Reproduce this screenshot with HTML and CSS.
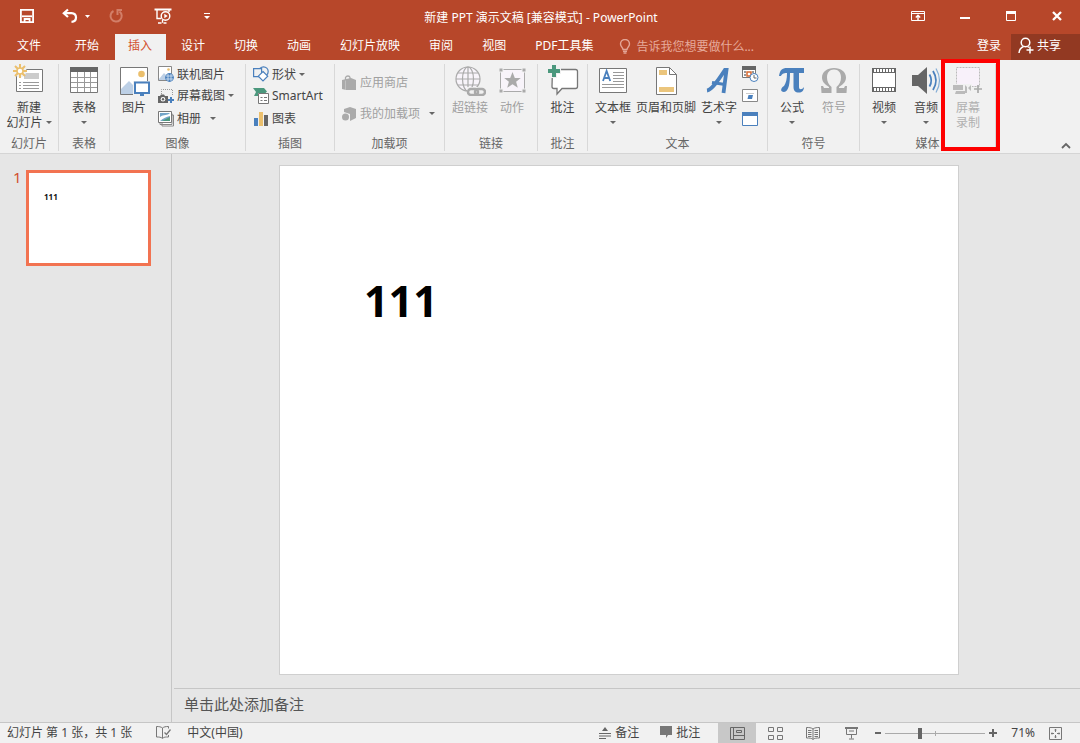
FILE: index.html
```html
<!DOCTYPE html>
<html lang="zh-CN">
<head>
<meta charset="utf-8">
<title>新建 PPT 演示文稿 [兼容模式] - PowerPoint</title>
<link rel="stylesheet" href="styles.css">
</head>
<body>
<div class="app">
  <header class="header">
    <div class="titlebar">
      <div class="quick">
        <button class="icon-btn save" aria-label="保存"><svg width="16" height="16" viewBox="0 0 16 16" fill="none" stroke="#fff" stroke-width="1.8"><path d="M1.9 1.9h12.2v12.2H1.9z"/><path d="M3 8.3h10"/><path d="M5.6 14v-3h5v3"/></svg></button>
        <button class="icon-btn undo" aria-label="撤消"><svg width="18" height="16" viewBox="0 0 18 16" fill="none" stroke="#fff" stroke-width="2.2"><path d="M7 1.5 2.8 5.2 7 9"/><path d="M3 5.2h7.5c6 .3 6 8.3 0 8.6"/></svg><svg width="5" height="3" viewBox="0 0 5 3"><path d="M0 0h5L2.5 3z" fill="#fff"/></svg></button>
        <button class="icon-btn redo" aria-label="重复"><svg width="16" height="16" viewBox="0 0 16 16" fill="none" stroke="#d27e68" stroke-width="2"><path d="M5.500 3A5.600 5.600 0 1 0 11.500 3.500"/><path d="M9.500 7V2h4.500"/></svg></button>
        <button class="icon-btn show" aria-label="从头开始放映"><svg width="18" height="16" viewBox="0 0 18 16" fill="none" stroke="#fff"><path d="M.5 1.5h17" stroke-width="2"/><path d="M3 2v8.500h4M15 2v2" stroke-width="1.400"/><circle cx="11.500" cy="8" r="4.300" stroke-width="1.400"/><path d="m10.300 5.800 3.400 2.200-3.400 2.200z" fill="#fff" stroke="none"/><path d="M8.500 12v2.700M4 15h3.500M9.500 15h3" stroke-width="1.300"/></svg></button>
        <button class="icon-btn" aria-label="自定义快速访问工具栏"><svg width="7" height="7" viewBox="0 0 7 7"><path d="M0 0h6v1H0zM0 3h6L3 6z" fill="#fff"/></svg></button>
      </div>
      <div class="title">新建 PPT 演示文稿 [兼容模式] - PowerPoint</div>
      <div class="window">
        <button class="icon-btn" aria-label="功能区显示选项"><svg width="14" height="12" viewBox="0 0 14 12" fill="none" stroke="#fff"><path d="M.5 1.500h13v9H.5zM.5 3.500h13"/><path d="M7 10V6M4.800 7.500 7 5.300l2.200 2.200" stroke-width="1.400"/></svg></button>
        <button class="icon-btn" aria-label="最小化"><svg width="12" height="12" viewBox="0 0 12 12"><path d="M1 7h10v2H1z" fill="#fff"/></svg></button>
        <button class="icon-btn" aria-label="最大化"><svg width="12" height="12" viewBox="0 0 12 12"><path d="M1.500 2h9v8.500h-9z" fill="none" stroke="#fff"/><path d="M1 1h10v3H1z" fill="#fff"/></svg></button>
        <button class="icon-btn" aria-label="关闭"><svg width="12" height="12" viewBox="0 0 12 12"><path d="m2 2 8 8M10 2l-8 8" stroke="#fff" stroke-width="2.300"/></svg></button>
      </div>
    </div>
    <nav class="tabs">
      <button class="tab file">文件</button>
      <button class="tab">开始</button>
      <button class="tab active">插入</button>
      <button class="tab">设计</button>
      <button class="tab">切换</button>
      <button class="tab">动画</button>
      <button class="tab">幻灯片放映</button>
      <button class="tab">审阅</button>
      <button class="tab">视图</button>
      <button class="tab">PDF工具集</button>
      <label class="tell"><svg width="12" height="15" viewBox="0 0 12 15" fill="none" stroke="#e3a596" stroke-width="1.400"><path d="M4 10.500C4 8.500 1.500 7.500 1.500 5a4.500 4.500 0 0 1 9 0c0 2.500-2.500 3.500-2.500 5.500z"/><path d="M4 12.200h4M4.500 14h3"/></svg><input type="text" placeholder="告诉我您想要做什么..." aria-label="告诉我您想要做什么"></label>
      <button class="login">登录</button>
      <button class="share"><svg width="16" height="17" viewBox="0 0 16 17" fill="none" stroke="#fff" stroke-width="1.500"><circle cx="7.500" cy="5.500" r="4.300"/><path d="M1 16c.3-4 2-5.500 4.500-6.500M9.500 9.500l1.500 1M8.500 13h7M12 9.500v7"/></svg>共享</button>
    </nav>
  </header>

  <section class="ribbon" aria-label="插入">
    <div class="group g-slides">
      <div class="tools center">
        <button class="big"><svg width="32" height="32" viewBox="0 0 32 32"><path d="M3.500 5.500h26v22h-26z" fill="#fff" stroke="#777"/><path d="M11 9h15v6H11z" fill="#ccc"/><path d="M6 18.500h2M10 18.500h16M6 21.500h2M10 21.500h16M6 24.500h2M10 24.500h16" stroke="#999"/><circle cx="7" cy="7" r="6.500" fill="#f1f1f1"/><path d="M7 0v14M0 7h14M2 2l10 10M12 2 2 12" stroke="#ebbf6c" stroke-width="2"/><circle cx="7" cy="7" r="3" fill="#fff" stroke="#ebbf6c" stroke-width="1.500"/></svg><span>新建</span><span class="line2">幻灯片<i class="caret"></i></span></button>
      </div>
      <div class="name">幻灯片</div>
    </div>
    <div class="group g-table">
      <div class="tools center">
        <button class="big"><svg width="32" height="32" viewBox="0 0 32 32"><path d="M2.500 3.500h27v25h-27z" fill="#fff" stroke="#777"/><path d="M2 3h28v5H2z" fill="#666"/><path d="M3 13.500h26M3 18.500h26M3 23.500h26M9.500 8v20M16.500 8v20M22.500 8v20" stroke="#999"/></svg><span>表格</span><span class="line2"><i class="caret"></i></span></button>
      </div>
      <div class="name">表格</div>
    </div>
    <div class="group g-images">
      <div class="tools">
        <button class="big"><svg width="32" height="32" viewBox="0 0 32 32"><path d="M2.500 3.500h27v27h-27z" fill="#fff" stroke="#777"/><circle cx="23.500" cy="10" r="3.300" fill="#ebbf6c"/><path d="M3 30V25l8-8 6 6v7z" fill="#bdd0e6"/><path d="M15 17h17v15H15z" fill="#f1f1f1"/><path d="M17 18.500h14v10.500H17z" fill="#fff" stroke="#4a80bd" stroke-width="2"/><path d="M22 30h4v2h-4z" fill="#4a80bd"/></svg><span>图片</span></button>
        <div class="stack">
          <button class="small"><svg width="16" height="16" viewBox="0 0 16 16"><path d="M.5.500h13v14H.5z" fill="#fff" stroke="#888"/><circle cx="10.500" cy="3.500" r="1.300" fill="#ebbf6c"/><path d="m1 13 5-6 3 3v4H1z" fill="#bdd0e6"/><circle cx="11.500" cy="11.500" r="4.400" fill="#4a80bd"/><path d="M8 10h7M8 13h7M10 8v7M13 8v7" stroke="#dce8f5" stroke-width=".8"/></svg>联机图片</button>
          <button class="small"><svg width="16" height="16" viewBox="0 0 16 16"><path d="M3.500 6V1.500h11V8" fill="none" stroke="#999" stroke-dasharray="1 1"/><path d="M0 8h2l1-1.500h3L7 8h3v7H0z" fill="#666"/><circle cx="5" cy="11.300" r="2.300" fill="#fff"/><circle cx="5" cy="11.300" r="1.200" fill="#666"/><path d="M13 9v6M10 12h6" stroke="#4a80bd" stroke-width="2"/></svg>屏幕截图<i class="caret"></i></button>
          <button class="small album"><svg width="16" height="16" viewBox="0 0 16 16"><path d="M4 4h11.500v11H4zM2 2.500h12v11H2z" fill="#fff" stroke="#888"/><path d="M.5.500h13v11H.5z" fill="#fff" stroke="#777"/><path d="M2 2h10v8H2z" fill="#73a5c9"/><path d="M2 6c4-3 7-1 10-4v3C8 6 6 7 2 10z" fill="#fff"/><path d="m4 10 8-4v4z" fill="#4b987d"/></svg>相册<i class="caret"></i></button>
        </div>
      </div>
      <div class="name">图像</div>
    </div>
    <div class="group g-illus">
      <div class="tools">
        <div class="stack">
          <button class="small"><svg width="16" height="16" viewBox="0 0 16 16" fill="#f1f1f1" stroke="#4a80bd" stroke-width="1.200"><circle cx="10.500" cy="5.500" r="4.700"/><path d="M.6 2.600h8v8h-8z"/><path d="m10 5.500 4.700 4.700-4.700 4.700-4.700-4.700z" fill="#fff"/></svg>形状<i class="caret"></i></button>
          <button class="small"><svg width="16" height="16" viewBox="0 0 16 16"><path d="M0 0h11l3 3.500-1.500 1.500H5v3H1l2-4z" fill="#4b987d"/><path d="M5.500 5.500h10v10h-10z" fill="#fff" stroke="#777"/><path d="M7.500 9.500h2M11 9.500h3M7.500 12.500h2M11 12.500h3" stroke="#777"/></svg>SmartArt</button>
          <button class="small"><svg width="16" height="16" viewBox="0 0 16 16"><path d="M1 7h4v8H1z" fill="#4a80bd"/><path d="M6 1h4v14H6z" fill="#ebbf6c"/><path d="M11 4h4v11h-4z" fill="#666"/></svg>图表</button>
        </div>
      </div>
      <div class="name">插图</div>
    </div>
    <div class="group g-addins">
      <div class="tools">
        <div class="stack wide">
          <button class="small" disabled><svg width="15" height="16" viewBox="0 0 15 16"><path d="m0 5 9-2 5 2v10H4l-4-1z" fill="#aaa"/><path d="M3.500 5V2.500c1-2 4-2 4.500 0V5" fill="none" stroke="#aaa" stroke-width="1.300"/><path d="M3.500 5.500V15" stroke="#ccc" stroke-width=".7"/></svg>应用商店</button>
          <button class="small mine" disabled><svg width="15" height="16" viewBox="0 0 15 16"><path d="m2 3 6-2 6 2v9l-6 3V8L2 6z" fill="#aaa"/><circle cx="3.500" cy="11" r="3.500" fill="#aaa"/></svg>我的加载项<i class="caret"></i></button>
        </div>
      </div>
      <div class="name">加载项</div>
    </div>
    <div class="group g-links">
      <div class="tools">
        <button class="big" disabled><svg width="32" height="32" viewBox="0 0 32 32" fill="none" stroke="#aaa"><g stroke-width="1.200"><circle cx="14" cy="15" r="12" fill="#f8f4fa"/><ellipse cx="14" cy="15" rx="5.500" ry="12"/><path d="M2 15h24M4 9h20M4 21h20M14 3v24"/></g><path d="M13 23h19v9H13z" fill="#f1f1f1" stroke="none"/><rect x="14" y="25" width="10" height="6" rx="3" stroke-width="2.500"/><rect x="21" y="25" width="10" height="6" rx="3" stroke-width="2.500"/></svg><span>超链接</span></button>
        <button class="big" disabled><svg width="32" height="32" viewBox="0 0 32 32"><path d="M4.500 5.500h24v22h-24z" fill="#f8f4fa" stroke="#aaa"/><path d="M3 4h4v4H3zM26 4h4v4h-4zM3 25h4v4H3zM26 25h4v4h-4z" fill="#aaa" stroke="#f1f1f1"/><path d="m16.500 8 2.300 6h6l-4.700 3.800 1.700 6-5.300-3.500-5.300 3.500 1.700-6L8.200 14h6z" fill="#aaa"/></svg><span>动作</span></button>
      </div>
      <div class="name">链接</div>
    </div>
    <div class="group g-comment">
      <div class="tools center">
        <button class="big"><svg width="32" height="32" viewBox="0 0 32 32"><path d="M5.500 5.500h23q2 0 2 2v15q0 2-2 2H15l-5 5.500v-5.500H7q-2 0-2-2z" fill="#fff" stroke="#777" stroke-width="1.300"/><path d="M3.500 0h6.500v3.500H14v6.500h-4V14H3.500v-4H0V3.500h3.500z" fill="#f1f1f1"/><path d="M5 1h4v4h4v4H9v4H5V9H1V5h4z" fill="#4b987d"/></svg><span>批注</span></button>
      </div>
      <div class="name">批注</div>
    </div>
    <div class="group g-text">
      <div class="tools">
        <button class="big"><svg width="32" height="32" viewBox="0 0 32 32"><path d="M2.500 4.500h27v24h-27z" fill="#fff" stroke="#777"/><path d="m6 17 3.600-10L13.200 17M7.200 14H12" fill="none" stroke="#4a80bd" stroke-width="1.800"/><path d="M16 8.500h11M16 11.500h11M16 14.500h11M16 17.500h11M5 20.500h22M5 23.500h22" stroke="#999"/></svg><span>文本框</span><span class="line2"><i class="caret"></i></span></button>
        <button class="big"><svg width="32" height="32" viewBox="0 0 32 32"><path d="M6.500 3.500h13l7 7v20h-20z" fill="#fff" stroke="#777"/><path d="M19.500 3.500v7h7" fill="none" stroke="#777"/><path d="M9 6h8v5H9zM9 23h15v5H9z" fill="#ebc57c"/></svg><span>页眉和页脚</span></button>
        <button class="big"><svg width="32" height="32" viewBox="0 0 32 32"><path d="M4 26.500C9 26 16 15 22 5.800h1.500L20.500 29" fill="none" stroke="#4a80bd" stroke-width="3.800"/><path d="m9 18.500 13 2" stroke="#4a80bd" stroke-width="3"/></svg><span>艺术字</span><span class="line2"><i class="caret"></i></span></button>
        <div class="stack">
          <button class="small" aria-label="日期和时间"><svg width="17" height="16" viewBox="0 0 17 16"><path d="M.5 1.500h13v10H.5z" fill="#fff" stroke="#777"/><path d="M0 0h14v4H0z" fill="#666"/><path d="M2 6h2M2 9h2M10 6h2" stroke="#777" stroke-width="1.500"/><path d="M5 6h4v4H5z" fill="none" stroke="#d86b32" stroke-width="1.500"/><circle cx="12" cy="11.500" r="4" fill="#fff" stroke="#4a80bd"/><path d="M12 9v3h2.500" fill="none" stroke="#666"/></svg></button>
          <button class="small" aria-label="幻灯片编号"><svg width="17" height="16" viewBox="0 0 17 16"><path d="M.5 1.500h15v12H.5z" fill="#fff" stroke="#888"/><path d="M4 5.500h8" stroke="#ccc"/><path d="M6.500 7H11l-1 4H5.500z" fill="#4a80bd"/></svg></button>
          <button class="small" aria-label="对象"><svg width="17" height="16" viewBox="0 0 17 16"><path d="M.5 1.500h15v13H.5z" fill="#fff" stroke="#4a80bd"/><path d="M0 1h16v4H0z" fill="#4a80bd"/></svg></button>
        </div>
      </div>
      <div class="name">文本</div>
    </div>
    <div class="group g-symbols">
      <div class="tools">
        <button class="big"><svg width="32" height="32" viewBox="0 0 32 32"><path d="M3 12C4 6 6 4 11 4h17v5h-5v14c0 3 3 3 5 0-.3 4-2 5.500-5 5.500-4 0-5.500-2-5.500-5.500V9h-3.500c0 9-1 19-6 19-4 0-3.500-4 0-6 2-3 3-7 3-13-4 0-5 1-6 3z" fill="#4a80bd"/></svg><span>公式</span><span class="line2"><i class="caret"></i></span></button>
        <button class="big" disabled><svg width="32" height="32" viewBox="0 0 32 32"><path d="M3 22h2l1 2h5v-1C6 20 4 17 4 13.500 4 8 9 4 16 4s12 4 12 9.500c0 3.500-2 6.500-7 9.500v1h5l1-2h2l-.5 7H18.500v-6c3-2.500 4.500-5.500 4.500-9.500 0-5-2.500-8-7-8s-7 3-7 8c0 4 1.500 7 4.500 9.500v6H3.500z" fill="#aaa"/></svg><span>符号</span></button>
      </div>
      <div class="name">符号</div>
    </div>
    <div class="group g-media">
      <div class="tools">
        <button class="big"><svg width="32" height="32" viewBox="0 0 32 32"><path d="M4 4h24v24H4z" fill="#666"/><path d="M5 9h22v14H5z" fill="#fff"/><path d="M6 6.500h21M6 25.500h21" stroke="#fff" stroke-width="3" stroke-dasharray="2 1"/></svg><span>视频</span><span class="line2"><i class="caret"></i></span></button>
        <button class="big"><svg width="32" height="32" viewBox="0 0 32 32"><path d="M2 11h6l9-8v27l-9-8H2z" fill="#666"/><path d="M19.500 10.500q3.500 6 0 12M23 7q6 9.500 0 19" fill="none" stroke="#4a80bd" stroke-width="1.800"/><path d="M26 4.500q7 12 0 24" fill="none" stroke="#85aed6" stroke-width="1.200"/></svg><span>音频</span><span class="line2"><i class="caret"></i></span></button>
        <button class="big faded" disabled><svg width="32" height="32" viewBox="0 0 32 32"><path d="M4.500 3.500h23v19h-23z" fill="#f8f1fa" stroke="#bbb" stroke-dasharray="2 1"/><path d="M0 20h20v11H0z" fill="#f1f1f1"/><path d="M1 21h10v5H1zM4 27h9v3H3zM13 21l2 2v6h-2zM16 24l3-3v6z" fill="#bbb"/><path d="M26 21v8M22 25h8" stroke="#aaa" stroke-width="1.700"/></svg><span>屏幕</span><span>录制</span></button>
      </div>
      <div class="name">媒体</div>
      <div class="marker"></div>
    </div>
    <button class="collapse" aria-label="折叠功能区"><svg width="10" height="7" viewBox="0 0 10 7"><path d="m1 6 4-4 4 4" fill="none" stroke="#666" stroke-width="1.800"/></svg></button>
  </section>

  <main class="work">
    <aside class="slides">
      <span class="num">1</span>
      <button class="thumb" aria-label="幻灯片 1"><span>111</span></button>
    </aside>
    <div class="editor">
      <div class="stage"><article class="slide"><h1>111</h1></article></div>
      <textarea class="notes" rows="1" placeholder="单击此处添加备注" aria-label="备注"></textarea>
    </div>
  </main>

  <footer class="status">
    <span class="count">幻灯片 第 1 张，共 1 张</span>
    <button class="icon-btn proof" aria-label="拼写检查"><svg width="15" height="13" viewBox="0 0 15 13" fill="none" stroke="#777"><path d="M6.500 12V2C5 .8 3 .5.500.500v10.500c2.500 0 4.500 0 6 1.500 1-1 2-1.500 4-1.500h2V9M6.500 2C8 .8 9.500.500 12.500.500v2"/><path d="m8.500 6.500 2 2 4-5" stroke-width="1.300"/></svg></button>
    <button class="lang">中文(中国)</button>
    <div class="views">
      <button class="note-btn"><svg width="12" height="13" viewBox="0 0 12 13"><path d="M3 5h6L6 1zM0 7h12v1H0zM0 9.500h12v1H0zM0 12h7v1H0z" fill="#666"/></svg>备注</button>
      <button class="note-btn comments"><svg width="12" height="12" viewBox="0 0 12 12"><path d="M0 0h12v9H8l-2 3V9H0z" fill="#777"/></svg>批注</button>
      <button class="view on" aria-label="普通视图"><svg width="15" height="13" viewBox="0 0 15 13" fill="none" stroke="#666"><path d="M.5.500h14v12H.5zM3.500.500v12M3.500 8.500h11M6.500 3.500h5v2h-5z"/></svg></button>
      <button class="view" aria-label="幻灯片浏览"><svg width="15" height="13" viewBox="0 0 15 13" fill="none" stroke="#777"><path d="M.5.500h5v4h-5zM9.500.500h5v4h-5zM.5 8.500h5v4h-5zM9.500 8.500h5v4h-5z"/></svg></button>
      <button class="view" aria-label="阅读视图"><svg width="14" height="13" viewBox="0 0 14 13" fill="none" stroke="#777"><path d="M7 2C5 .5 3 .5.500.500V11c3 0 5 0 6.500 1.500C8.500 11 10.500 11 13.500 11V.5C11 .5 9 .5 7 2zv10M2 3.500h3.500M2 5.500h3.500M2 7.500h3.500M2 9.500h3.500M8.500 3.500H12M8.500 5.500H12M8.500 7.500H12M8.500 9.500H12"/></svg></button>
      <button class="view" aria-label="幻灯片放映"><svg width="13" height="13" viewBox="0 0 13 13" fill="none" stroke="#777"><path d="M0 1h13" stroke-width="2"/><path d="M1.500 2v5.500h10V2M4 4h5M6.500 7.500v4M4 12h5"/></svg></button>
      <button class="icon-btn zoom-btn" aria-label="缩小"><svg width="8" height="8" viewBox="0 0 8 8"><path d="M1 3h6v2H1z" fill="#666"/></svg></button>
      <input class="zoom" type="range" min="0" max="100" value="34" aria-label="缩放">
      <button class="icon-btn zoom-btn" aria-label="放大"><svg width="8" height="8" viewBox="0 0 8 8"><path d="M0 3h8v2H0zM3 0h2v8H3z" fill="#666"/></svg></button>
      <button class="percent">71%</button>
      <button class="icon-btn" aria-label="适应窗口"><svg width="13" height="13" viewBox="0 0 13 13" fill="none" stroke="#777"><path d="M.5.500h12v12H.5z"/><path d="M6.500 2v3M6.500 8v3M2 6.500h3M8 6.500h3M5.500 3h2M5.500 10h2M3 5.500v2M10 5.500v2"/></svg></button>
    </div>
  </footer>
</div>
</body>
</html>
```
FILE: styles.css
```css
* { box-sizing: border-box; }
body {
  margin: 0;
  font: 12px/15px "Noto Sans", "Noto Sans CJK SC", sans-serif;
  color: #444;
  background: #e6e6e6;
}
button, input, textarea {
  font: inherit;
  color: inherit;
  margin: 0;
  padding: 0;
  border: 0;
  background: none;
  white-space: nowrap;
}
svg { display: block; flex: none; }
.app { display: flex; flex-direction: column; height: 100vh; }
.icon-btn { display: flex; align-items: center; }

.header { background: #b7472a; color: #fff; }
.titlebar {
  display: grid;
  grid-template-columns: 1fr auto 1fr;
  align-items: center;
  height: 34px;
  padding: 0 17px 2px 19px;
}
.quick { display: flex; align-items: center; }
.save { margin-right: 26px; }
.undo { gap: 6px; margin-right: 18px; }
.redo { margin-right: 30px; }
.show { margin-right: 32px; }
.title { line-height: 18px; padding-top: 4px; }
.window { display: flex; justify-content: flex-end; gap: 34px; }

.tabs { display: flex; gap: 2px; height: 26px; align-items: stretch; }
.tab { padding: 0 14px 4px 13px; }
.tab.file { padding: 0 19px 4px 17px; }
.tab.active { background: #f1f1f1; color: #d2512f; }
.tell { display: flex; align-items: center; gap: 5px; padding: 0 0 2px 10px; flex: 1; }
.tell input { flex: 1; min-width: 120px; }
.tell input::placeholder { color: #e6aa9b; opacity: 1; }
.login { padding: 0 8px 4px; }
.share { display: flex; align-items: center; gap: 3px; padding: 0 19px 4px 7px; background: #923922; }

.ribbon {
  display: flex;
  height: 94px;
  background: #f1f1f1;
  border-bottom: 1px solid #d5d5d5;
}
.group {
  position: relative;
  display: flex;
  flex-direction: column;
  justify-content: space-between;
  margin: 4px 0 2px;
  border-right: 1px solid #d8d8d8;
  flex: none;
}
.name { text-align: center; color: #666; line-height: 15px; }
.tools { display: flex; align-items: flex-start; padding: 0 7px; gap: 8px; }
.tools.center { justify-content: center; padding: 0; }
.g-slides { width: 59px; }
.g-table { width: 51px; }
.g-images { width: 136px; }
.g-images .tools { padding: 0 8px; }
.g-illus { width: 89px; }
.g-addins { width: 110px; }
.g-links { width: 93px; }
.g-comment { width: 50px; }
.g-text { width: 180px; }
.g-text .tools { gap: 5px; }
.g-symbols { width: 92px; }
.g-symbols .tools, .g-media .tools { padding: 0 8px; gap: 10px; }
.g-media { width: 136px; }
.big { display: flex; flex-direction: column; align-items: center; }
.big svg { margin-bottom: 4px; }
.line2 { display: flex; align-items: center; gap: 3px; height: 15px; }
.caret { border: 3px solid transparent; border-top-color: #666; border-bottom: 0; }
button:disabled { color: #a0a0a0; }
.faded:disabled { color: #b0b0b0; }
.stack { display: flex; flex-direction: column; }
.small { display: flex; align-items: center; gap: 3px; height: 23px; }
.stack .small:first-child { height: 20px; }
.album .caret { margin-left: 6px; }
.stack.wide { padding-top: 3px; }
.stack.wide .small, .stack.wide .small:first-child { height: 31px; }
.mine .caret { margin-left: 6px; }
.marker {
  position: absolute;
  left: 81px;
  top: -5px;
  width: 59px;
  height: 92px;
  border: 4px solid #fe0000;
  pointer-events: none;
}
.collapse { margin-left: auto; align-self: flex-end; padding: 0 9px 4px 0; }

.work { display: flex; flex: 1; min-height: 0; }
.slides {
  display: flex;
  align-items: flex-start;
  width: 172px;
  padding: 16px 20px 0 13px;
  border-right: 1px solid #c6c6c6;
}
.num { font-size: 15px; color: #d2512f; flex: none; width: 13px; }
.thumb {
  flex: 1;
  aspect-ratio: 125 / 96;
  display: flex;
  align-items: flex-start;
  padding: 16px 0 0 15px;
  background: #fff;
  border: 3px solid #f27351;
}
.thumb span { font-size: 8px; font-weight: 700; color: #111; }
.editor { flex: 1; display: flex; flex-direction: column; min-width: 0; padding-left: 2px; }
.stage { flex: 1; min-height: 0; display: flex; justify-content: center; padding: 11px 16px 13px 0; }
.slide { height: 100%; aspect-ratio: 4 / 3; background: #fff; border: 1px solid #cfcfcf; padding: 105px 84px; }
.slide h1 { margin: 0; font-size: 43px; line-height: 60px; font-weight: 700; color: #000; }
.notes {
  height: 34px;
  padding: 4px 10px;
  border-top: 1px solid #c6c6c6;
  font-size: 15px;
  line-height: 22px;
  resize: none;
  overflow: hidden;
}
.notes::placeholder { color: #555; opacity: 1; }

.status {
  display: flex;
  align-items: center;
  height: 21px;
  padding: 0 18px 2px 7px;
  background: #f1f1f1;
  border-top: 1px solid #c6c6c6;
}
.proof { margin: 0 16px 0 24px; }
.views { display: flex; align-items: center; align-self: stretch; margin: 0 0 -2px auto; }
.note-btn { display: flex; align-items: center; gap: 4px; padding-bottom: 2px; }
.comments { margin: 0 18px 0 21px; }
.view { display: flex; align-items: center; justify-content: center; align-self: stretch; width: 38px; }
.view.on { background: #c8c8c8; }
.zoom-btn { margin: 0 3px 0 4px; }
.zoom {
  appearance: none;
  width: 100px;
  height: 12px;
  background:
    linear-gradient(#aaa, #aaa) 50% 50% / 1px 5px no-repeat,
    linear-gradient(#aaa, #aaa) 0 50% / 100% 1px no-repeat;
}
.zoom::-webkit-slider-thumb { appearance: none; width: 4px; height: 11px; background: #666; }
.percent { margin: 0 14px 2px 11px; }
```
